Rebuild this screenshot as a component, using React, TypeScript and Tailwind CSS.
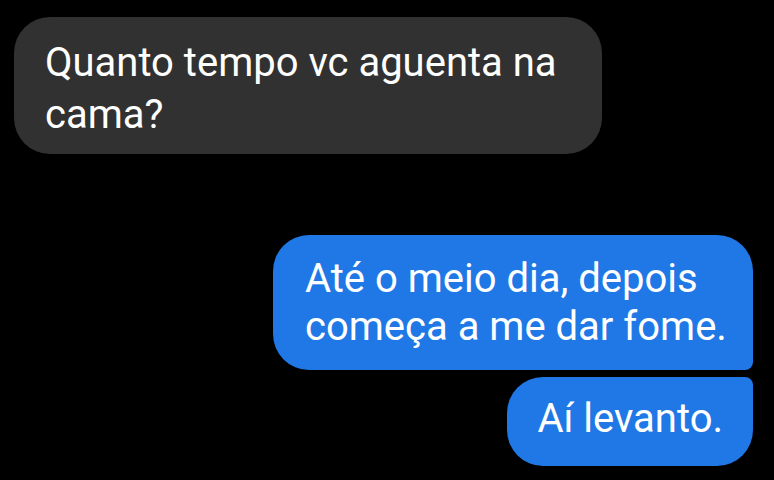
import React from 'react';

const App: React.FC = () => {
  return (
    <div className="w-[774px] h-[480px] bg-black overflow-hidden flex flex-col font-['Roboto',sans-serif] text-white text-[40px]">
      {/* Incoming message */}
      <div className="flex justify-start pl-[14px] pt-[17px]">
        <div className="w-[588px] bg-[#313131] rounded-[36px] pl-[31px] pr-[36px] pt-[20px] pb-[13px] leading-[52px]">
          Quanto tempo vc aguenta na cama?
        </div>
      </div>

      {/* Outgoing messages */}
      <div className="flex flex-col items-end gap-[7px] pr-[21px] mt-[81px] leading-[48px]">
        <div className="w-[480px] bg-[#1f78e6] rounded-[36px] rounded-br-[8px] pl-[32px] pr-[20px] pt-[20px] pb-[19px]">
          Até o meio dia, depois começa a me dar fome.
        </div>
        <div className="bg-[#1f78e6] rounded-[36px] rounded-tr-[8px] pl-[30px] pr-[30px] pt-[18px] pb-[23px]">
          Aí levanto.
        </div>
      </div>
    </div>
  );
};

export default App;
